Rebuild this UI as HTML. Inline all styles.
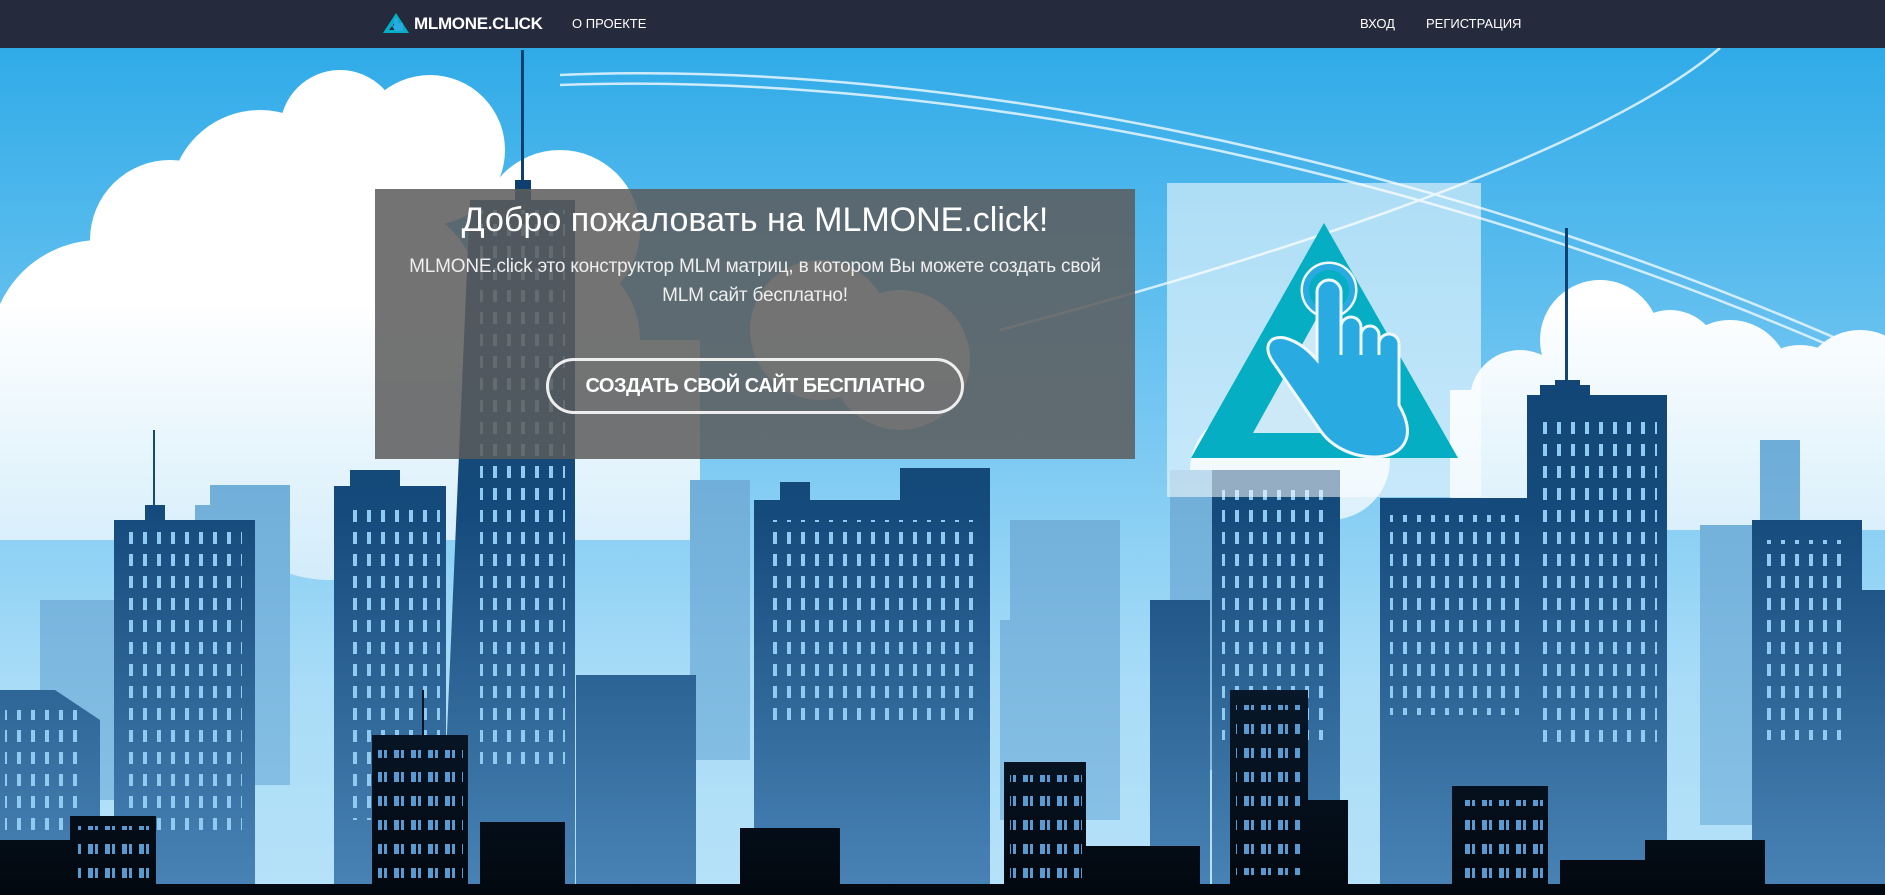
<!DOCTYPE html>
<html><head><meta charset="utf-8"><style>
*{margin:0;padding:0;box-sizing:border-box}
body{width:1885px;height:895px;overflow:hidden;font-family:"Liberation Sans Narrow","Liberation Sans",sans-serif;background:#2ea8e6;position:relative}
nav{position:absolute;left:0;top:0;width:1885px;height:48px;background:#252a3d;color:#fff;z-index:5}
nav .brand{position:absolute;left:382px;top:12px;font-family:"Liberation Sans",sans-serif;font-weight:bold;font-size:17px;letter-spacing:-0.3px}
nav .brand span{position:absolute;left:32px;top:2px;white-space:nowrap}
nav a{position:absolute;top:16px;font-family:"Liberation Sans",sans-serif;font-size:13px;color:#fff;white-space:nowrap}
#bg{position:absolute;left:0;top:48px}
.box{position:absolute;left:375px;top:189px;width:760px;height:270px;background:rgba(92,92,92,0.86);color:#fff;text-align:center;z-index:3}
.box h1{font-weight:normal;font-size:34px;margin-top:12px;letter-spacing:0}
.box p{font-size:19px;line-height:29px;margin-top:12px;color:#eee;letter-spacing:-0.2px}
.btn{position:absolute;left:171px;top:169px;width:418px;height:56px;border:3px solid #eee;border-radius:28px;font-weight:bold;font-size:20px;line-height:50px;color:#fff;letter-spacing:-0.5px}
.logo{position:absolute;left:1167px;top:183px;width:314px;height:314px;background:rgba(255,255,255,0.55);z-index:3}
</style></head><body>
<svg id="bg" width="1885" height="847" viewBox="0 48 1885 847">
<defs>
<linearGradient id="sky" x1="0" y1="48" x2="0" y2="895" gradientUnits="userSpaceOnUse">
<stop offset="0" stop-color="#30abe8"/><stop offset="0.45" stop-color="#78c8f2"/><stop offset="0.75" stop-color="#a9dcf7"/><stop offset="1" stop-color="#b6e2f8"/></linearGradient>
<linearGradient id="cl" x1="0" y1="48" x2="0" y2="895" gradientUnits="userSpaceOnUse">
<stop offset="0.3" stop-color="#ffffff"/><stop offset="0.6" stop-color="#d6eefb"/><stop offset="1" stop-color="#a6d8f4"/></linearGradient>
<linearGradient id="bl" x1="0" y1="48" x2="0" y2="895" gradientUnits="userSpaceOnUse">
<stop offset="0.2" stop-color="#0e3f6e"/><stop offset="0.55" stop-color="#154b7c"/><stop offset="1" stop-color="#4a84b6"/></linearGradient>
<linearGradient id="lt" x1="0" y1="48" x2="0" y2="895" gradientUnits="userSpaceOnUse">
<stop offset="0.4" stop-color="#6aaad6"/><stop offset="1" stop-color="#8cc4e8"/></linearGradient>
<linearGradient id="dk" x1="0" y1="600" x2="0" y2="895" gradientUnits="userSpaceOnUse">
<stop offset="0" stop-color="#0a1f36"/><stop offset="1" stop-color="#02080f"/></linearGradient>
<pattern id="w" width="14" height="22" patternUnits="userSpaceOnUse"><rect x="3" y="4" width="4" height="12" fill="#8fcaf0"/></pattern>
<pattern id="w2" width="17" height="24" patternUnits="userSpaceOnUse"><rect x="3" y="4" width="5" height="10" fill="#5b9ad0"/><rect x="10" y="4" width="3" height="10" fill="#5b9ad0"/></pattern>
</defs>
<rect x="0" y="48" width="1885" height="847" fill="url(#sky)"/>
<g fill="none" stroke="#e8f6ff" stroke-width="2.5" opacity="0.85">
<path d="M560 75 C 900 60 1400 140 1885 360"/>
<path d="M560 85 C 900 72 1400 150 1885 370"/>
<path d="M1000 330 C 1300 250 1600 150 1720 48"/>
</g>
<g fill="url(#cl)">
<circle cx="430" cy="150" r="75"/><circle cx="340" cy="130" r="60"/><circle cx="350" cy="210" r="70"/><circle cx="260" cy="200" r="90"/><circle cx="170" cy="240" r="80"/><circle cx="100" cy="350" r="110"/><circle cx="40" cy="400" r="90"/><circle cx="230" cy="380" r="110"/><circle cx="380" cy="300" r="100"/><circle cx="560" cy="230" r="80"/><circle cx="330" cy="450" r="130"/><circle cx="550" cy="340" r="90"/><circle cx="820" cy="330" r="70"/><circle cx="900" cy="360" r="70"/>
<rect x="0" y="340" width="700" height="200"/>
<circle cx="1600" cy="340" r="60"/><circle cx="1670" cy="360" r="50"/><circle cx="1730" cy="380" r="60"/><circle cx="1800" cy="400" r="55"/><circle cx="1860" cy="390" r="60"/><circle cx="1520" cy="400" r="50"/>
<rect x="1450" y="390" width="435" height="140"/>
<circle cx="1250" cy="470" r="60"/><circle cx="1330" cy="460" r="60"/>
</g>
<g fill="url(#lt)">
<rect x="40" y="600" width="90" height="200"/><rect x="210" y="485" width="80" height="300"/><rect x="195" y="505" width="30" height="40"/>
<rect x="690" y="480" width="60" height="280"/><rect x="1000" y="620" width="120" height="200"/><rect x="1010" y="520" width="110" height="100"/>
<rect x="1700" y="525" width="120" height="300"/><rect x="1760" y="440" width="40" height="90"/>
<rect x="1170" y="470" width="80" height="300"/>
</g>
<g fill="url(#bl)">
<rect x="521" y="50" width="3" height="140"/><rect x="515" y="180" width="16" height="20"/><path d="M470 200 L575 200 L575 895 L440 895 Z"/>
<rect x="153" y="430" width="2" height="80"/><rect x="145" y="505" width="20" height="15"/><rect x="114" y="520" width="141" height="375"/>
<rect x="334" y="486" width="112" height="409"/><rect x="350" y="470" width="50" height="20"/>
<rect x="754" y="500" width="160" height="395"/><rect x="780" y="482" width="30" height="20"/><rect x="900" y="468" width="90" height="427"/>
<rect x="1212" y="470" width="128" height="425"/>
<rect x="1380" y="498" width="148" height="397"/>
<rect x="1565" y="228" width="3" height="160"/><rect x="1555" y="380" width="25" height="30"/><rect x="1527" y="395" width="140" height="500"/><rect x="1540" y="385" width="50" height="15"/>
<rect x="1752" y="520" width="110" height="375"/>
<path d="M0 690 L55 690 L100 720 L100 895 L0 895Z"/>
<rect x="576" y="675" width="120" height="220"/><rect x="1150" y="600" width="60" height="295"/>
<rect x="1830" y="590" width="55" height="305"/>
</g>
<g>
<rect x="122" y="530" width="120" height="300" fill="url(#w)"/>
<rect x="345" y="500" width="95" height="320" fill="url(#w)"/>
<rect x="480" y="210" width="85" height="560" fill="url(#w)"/>
<rect x="765" y="520" width="210" height="210" fill="url(#w)"/>
<rect x="1222" y="490" width="110" height="250" fill="url(#w)"/>
<rect x="1390" y="515" width="130" height="200" fill="url(#w)"/>
<rect x="1537" y="420" width="120" height="330" fill="url(#w)"/>
<rect x="1760" y="540" width="90" height="200" fill="url(#w)"/>
<rect x="5" y="710" width="80" height="120" fill="url(#w)"/>
</g>
<g fill="url(#dk)">
<rect x="70" y="816" width="86" height="79"/><rect x="0" y="840" width="80" height="55"/>
<rect x="422" y="690" width="2" height="50"/><rect x="372" y="735" width="96" height="160"/>
<rect x="480" y="822" width="85" height="73"/>
<rect x="740" y="828" width="100" height="67"/>
<rect x="1004" y="762" width="82" height="133"/><rect x="1086" y="846" width="114" height="49"/>
<rect x="1230" y="690" width="78" height="205"/><rect x="1308" y="800" width="40" height="95"/>
<rect x="1452" y="786" width="96" height="109"/>
<rect x="1645" y="840" width="120" height="55"/><rect x="1560" y="860" width="90" height="35"/>
<rect x="0" y="884" width="1885" height="11"/>
</g>
<g>
<rect x="378" y="750" width="85" height="130" fill="url(#w2)"/>
<rect x="1010" y="775" width="72" height="110" fill="url(#w2)"/>
<rect x="1236" y="705" width="66" height="170" fill="url(#w2)"/>
<rect x="1458" y="800" width="85" height="80" fill="url(#w2)"/>
<rect x="76" y="826" width="76" height="55" fill="url(#w2)"/>
</g>
</svg>
<nav>
<div class="brand"><svg width="28" height="22" viewBox="0 0 28 22"><path d="M14 1 L27 21 L1 21 Z" fill="#05aec2"/><path d="M14 9 L21 18 L7 18Z" fill="#252a3d"/><path d="M12 6 v8 l-3-2 l4 7 h8 v-8 h-5 v-5z" fill="#2aaae2"/></svg><span>MLMONE.CLICK</span></div>
<a style="left:572px">О ПРОЕКТЕ</a>
<a style="left:1360px">ВХОД</a>
<a style="left:1426px">РЕГИСТРАЦИЯ</a>
</nav>
<div class="box">
<h1>Добро пожаловать на MLMONE.click!</h1>
<p>MLMONE.click это конструктор MLM матриц, в котором Вы можете создать свой<br>MLM сайт бесплатно!</p>
<div class="btn">СОЗДАТЬ СВОЙ САЙТ БЕСПЛАТНО</div>
</div>
<div class="logo"><svg width="314" height="314" viewBox="1167 183 314 314">
<path d="M1324 223 L1458 458 L1191 458 Z" fill="#05aec2"/>
<path d="M1324 305 L1395 433 L1253 433 Z" fill="#cde9f7"/>
<circle cx="1329" cy="290" r="27" fill="none" stroke="#f0f8fc" stroke-width="3"/>
<circle cx="1329" cy="290" r="23" fill="none" stroke="#29abe2" stroke-width="6"/>
<path d="M1317 292 a12 12 0 0 1 24 0 V355 V327 a10 10 0 0 1 20 0 V355 V335 a9 9 0 0 1 18 0 V355 V344 a10 10 0 0 1 20 0 V405 C1419 440 1400 457 1375 457 C1350 457 1330 445 1320 430 L1273 362 C1262 346 1270 335 1285 338 C1300 342 1310 352 1317 360 Z" fill="#29abe2" stroke="#f0f8fc" stroke-width="3"/>
</svg></div>
</body></html>
